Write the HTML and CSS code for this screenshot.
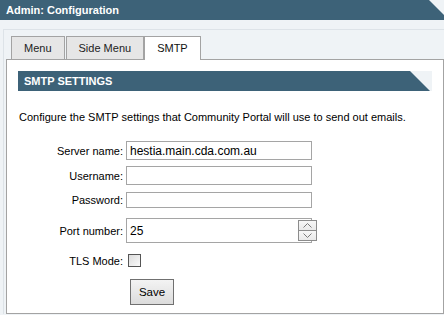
FILE: index.html
```html
<!DOCTYPE html>
<html>
<head>
<meta charset="utf-8">
<link rel="stylesheet" href="styles.css">
</head>
<body>
<div class="header">Admin: Configuration</div>
<div class="wrap">
  <div class="tabs">
    <div class="tab">Menu</div>
    <div class="tab">Side Menu</div>
    <div class="tab active">SMTP</div>
  </div>
  <div class="panel">
    <div class="bar"><div class="bar-fill">SMTP SETTINGS</div></div>
    <p class="desc">Configure the SMTP settings that Community Portal will use to send out emails.</p>
    <div class="form">
      <div class="row r1">
        <label class="lbl">Server name:</label>
        <input class="field" type="text" value="hestia.main.cda.com.au">
      </div>
      <div class="row r2">
        <label class="lbl">Username:</label>
        <input class="field" type="text" value="">
      </div>
      <div class="row r3">
        <label class="lbl">Password:</label>
        <input class="field short" type="password" value="">
      </div>
      <div class="row r4">
        <label class="lbl">Port number:</label>
        <div class="spin-wrap">
          <input class="field tall" type="text" value="25">
          <div class="spinner">
            <span class="spin-btn"><svg width="9" height="5" viewBox="0 0 9 5"><polyline points="0.5,4.5 4.5,0.5 8.5,4.5" fill="none" stroke="#7a7a7a" stroke-width="1"/></svg></span>
            <span class="spin-btn"><svg width="9" height="5" viewBox="0 0 9 5"><polyline points="0.5,0.5 4.5,4.5 8.5,0.5" fill="none" stroke="#7a7a7a" stroke-width="1"/></svg></span>
          </div>
        </div>
      </div>
      <div class="row r5">
        <label class="lbl">TLS Mode:</label>
        <span class="check"></span>
      </div>
      <div class="row r6">
        <span class="lbl"></span>
        <button class="btn" type="button">Save</button>
      </div>
    </div>
  </div>
</div>
</body>
</html>
```
FILE: styles.css
```css
* { box-sizing: border-box; }
html, body { margin: 0; padding: 0; }
body {
  background: #eff3f6;
  font-family: "Liberation Sans", Arial, sans-serif;
  font-size: 11px;
  color: #000;
  width: 444px;
  height: 315px;
  overflow: hidden;
}
.header {
  height: 20px;
  line-height: 20px;
  background: #3d6278;
  color: #fff;
  font-weight: bold;
  font-size: 11px;
  padding-left: 6px;
  clip-path: polygon(0 0, calc(100% - 15px) 0, 100% 15px, 100% 100%, 0 100%);
}
.wrap {
  margin-top: 9px;
  margin-left: 3px;
  border-top: 1px solid #dde3e8;
  border-left: 1px solid #dde3e8;
  padding-top: 6px;
}
.tabs {
  display: flex;
  align-items: flex-end;
  padding-left: 7px;
}
.tab {
  position: relative;
  z-index: 1;
  height: 23px;
  line-height: 22px;
  padding: 0 12px;
  border: 1px solid #a3a3a3;
  border-bottom: none;
  background: #e6e6e6;
  color: #222;
  margin-right: 1px;
}
.tab.active {
  background: #fff;
  height: 24px;
  margin-bottom: -1px;
  margin-left: -1px;
  color: #111;
}
.panel {
  margin-left: 2px;
  height: 255px;
  border: 1px solid #a3a3a3;
  background: #fff;
  padding: 11px 11px 0 11px;
}
.bar {
  height: 20px;
  background: #eff3f6;
}
.bar-fill {
  height: 20px;
  line-height: 20px;
  background: #3d6278;
  color: #fff;
  font-weight: bold;
  padding-left: 6px;
  clip-path: polygon(0 0, calc(100% - 22px) 0, calc(100% - 2px) 100%, 0 100%);
}
.desc {
  margin: 19px 0 0 1px;
  line-height: 14px;
}
.form {
  margin-top: 17px;
  display: flex;
  flex-direction: column;
}
.row {
  display: flex;
  align-items: center;
}
.r2 { margin-top: 6px; }
.r3 { margin-top: 7px; }
.r4 { margin-top: 10px; }
.r5 { margin-top: 11px; }
.r6 { margin-top: 12px; }
.lbl {
  width: 105px;
  text-align: right;
  margin-right: 3px;
  flex: none;
}
.field {
  width: 186px;
  height: 19px;
  border: 1px solid #a5a5a5;
  padding: 0 3px;
  margin: 0;
  font-family: "Liberation Sans", Arial, sans-serif;
  font-size: 12px;
  color: #000;
  background: #fff;
  outline: none;
}
.field.short { height: 16px; }
.field.tall { height: 25px; }
.spin-wrap {
  position: relative;
  display: flex;
}
.spinner {
  position: absolute;
  left: 172px;
  top: 2px;
  width: 19px;
  height: 21px;
  border: 1px solid #8c8c8c;
  display: flex;
  flex-direction: column;
  background: #f4f4f4;
}
.spin-btn {
  flex: 1;
  display: flex;
  align-items: center;
  justify-content: center;
  background: linear-gradient(#f7f7f7, #e9e9e9);
}
.spin-btn + .spin-btn { border-top: 1px solid #8c8c8c; }
.check {
  width: 13px;
  height: 13px;
  margin-left: 2px;
  border: 1px solid #555;
  background: linear-gradient(135deg, #dcdcdc, #fafafa);
}
.btn {
  margin: 0 0 0 4px;
  width: 44px;
  height: 26px;
  border: 1px solid #707070;
  background: linear-gradient(#f3f3f3, #dcdcdc);
  font-family: "Liberation Sans", Arial, sans-serif;
  font-size: 11.5px;
  color: #000;
  padding: 0;
}
```
